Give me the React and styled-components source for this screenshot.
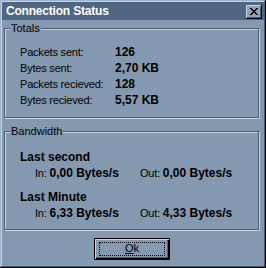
import { Fragment } from "react";
import styled, { createGlobalStyle } from "styled-components";

const face = "#8499b0";
const light = "#c6d3e0";
const shadow = "#4c5d70";

const Global = createGlobalStyle`
  html, body {
    margin: 0;
    padding: 0;
    background: ${face};
  }
  body {
    font-family: "Liberation Sans", Arial, sans-serif;
    font-size: 11px;
    color: #000;
  }
`;

const Window = styled.div`
  width: 266px;
  height: 268px;
  box-sizing: border-box;
  padding: 2px;
  background: ${face};
  box-shadow: inset -1px -1px 0 #000, inset 1px 1px 0 #9fb2c6,
    inset -2px -2px 0 ${shadow}, inset 2px 2px 0 ${light};
  display: flex;
  flex-direction: column;
`;

const TitleBar = styled.div`
  height: 18px;
  background: #4f6682;
  display: flex;
  align-items: center;
  justify-content: space-between;
  padding: 0 2px 0 4px;
`;

const Title = styled.span`
  color: #fff;
  font-weight: bold;
  font-size: 12px;
  letter-spacing: -0.2px;
`;

const CloseButton = styled.button`
  width: 16px;
  height: 14px;
  padding: 0;
  border: none;
  background: #8ea3ba;
  box-shadow: inset -1px -1px 0 #000, inset 1px 1px 0 ${light},
    inset -2px -2px 0 ${shadow};
  display: flex;
  align-items: center;
  justify-content: center;
  margin-top: 1px;
`;

const Body = styled.div`
  display: flex;
  flex-direction: column;
  padding: 0 5px 0 2px;
`;

const Group = styled.div`
  margin-top: ${(p) => p.$top}px;
  border: 1px solid ${shadow};
  box-shadow: inset 1px 1px 0 ${light}, 1px 1px 0 ${light};
  padding: 0 0 ${(p) => p.$bottom}px 15px;
`;

const Legend = styled.div`
  display: table;
  margin: -7px 0 0 -10px;
  padding: 0 1px;
  height: 13px;
  line-height: 13px;
  background: ${face};
`;

const Stats = styled.div`
  margin-top: 9px;
  display: grid;
  grid-template-columns: 95px auto;
  grid-auto-rows: 16px;
  align-items: center;
  letter-spacing: -0.2px;
`;

const Value = styled.span`
  font-weight: bold;
  font-size: 12px;
  letter-spacing: 0;
`;

const Sections = styled.div`
  margin-top: 11px;
`;

const Section = styled.div`
  & + & {
    margin-top: 8px;
  }
`;

const Heading = styled.div`
  height: 16px;
  line-height: 16px;
  font-weight: bold;
  font-size: 12px;
`;

const Rate = styled.div`
  height: 16px;
  line-height: 16px;
  display: grid;
  grid-template-columns: 105px auto;
  padding-left: 15px;
  letter-spacing: -0.2px;
`;

const Footer = styled.div`
  display: flex;
  justify-content: center;
  margin-top: 8px;
  padding-left: 1px;
`;

const Button = styled.button`
  width: 76px;
  height: 22px;
  padding: 3px 4px;
  border: 1px solid #000;
  background: ${face};
  box-shadow: inset 1px 1px 0 ${light}, inset -1px -1px 0 #000,
    inset -2px -2px 0 ${shadow};
  font-family: inherit;
  font-size: 11px;
  color: #000;
  display: flex;
`;

const Focus = styled.span`
  flex: 1;
  border: 1px dotted #000;
  display: flex;
  align-items: flex-start;
  justify-content: center;
  line-height: 11px;
`;

const Key = styled.span`
  text-decoration: underline;
  text-underline-offset: 1px;
`;

const totals = [
  ["Packets sent:", "126"],
  ["Bytes sent:", "2,70 KB"],
  ["Packets recieved:", "128"],
  ["Bytes recieved:", "5,57 KB"],
];

const bandwidth = [
  { title: "Last second", inRate: "0,00 Bytes/s", outRate: "0,00 Bytes/s" },
  { title: "Last Minute", inRate: "6,33 Bytes/s", outRate: "4,33 Bytes/s" },
];

export default function App() {
  return (
    <>
      <Global />
      <Window>
        <TitleBar>
          <Title>Connection Status</Title>
          <CloseButton aria-label="Close">
            <svg width="8" height="7" viewBox="0 0 8 7" shapeRendering="crispEdges">
              <path
                d="M0 0h2v1h1v1h2v-1h1v-1h2v1h-1v1h-1v1h-1v1h1v1h1v1h1v1h-2v-1h-1v-1h-2v1h-1v1h-2v-1h1v-1h1v-1h1v-1h-1v-1h-1v-1h-1z"
                fill="#000"
              />
            </svg>
          </CloseButton>
        </TitleBar>
        <Body>
          <Group $top={8} $bottom={9}>
            <Legend>Totals</Legend>
            <Stats>
              {totals.map(([label, value]) => (
                <Fragment key={label}>
                  <span>{label}</span>
                  <Value>{value}</Value>
                </Fragment>
              ))}
            </Stats>
          </Group>
          <Group $top={13} $bottom={8}>
            <Legend>Bandwidth</Legend>
            <Sections>
              {bandwidth.map((b) => (
                <Section key={b.title}>
                  <Heading>{b.title}</Heading>
                  <Rate>
                    <span>
                      In: <Value>{b.inRate}</Value>
                    </span>
                    <span>
                      Out: <Value>{b.outRate}</Value>
                    </span>
                  </Rate>
                </Section>
              ))}
            </Sections>
          </Group>
          <Footer>
            <Button>
              <Focus>
                <Key>O</Key>k
              </Focus>
            </Button>
          </Footer>
        </Body>
      </Window>
    </>
  );
}
